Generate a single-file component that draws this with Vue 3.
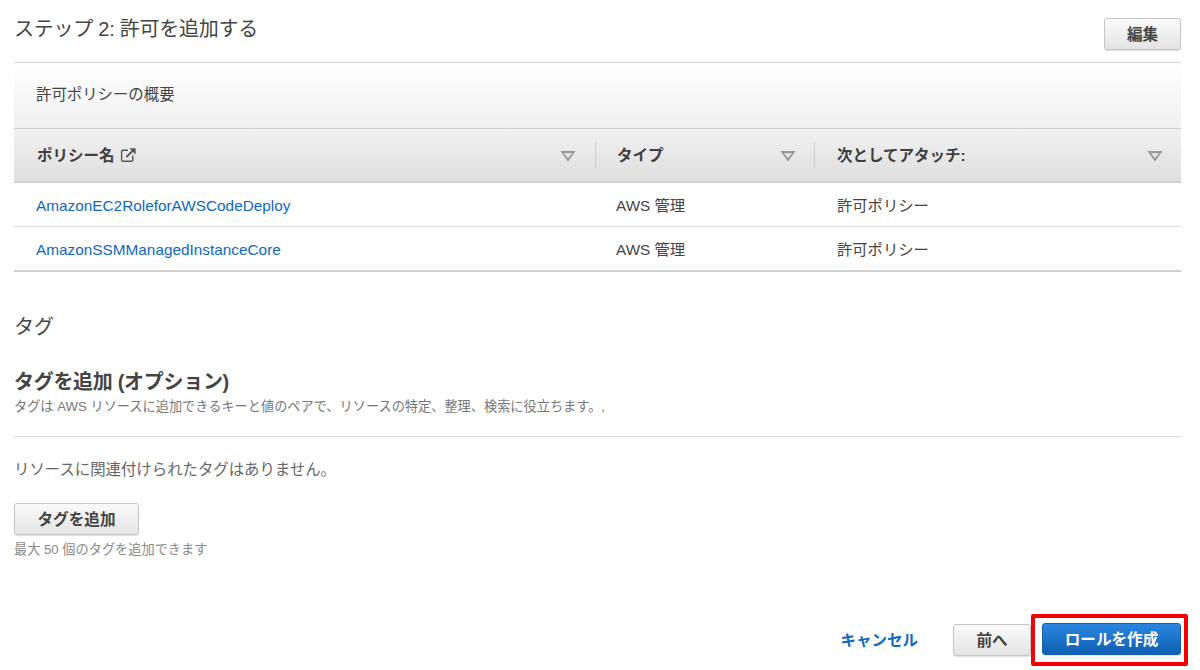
<script setup>
const policies = [
  { name: 'AmazonEC2RoleforAWSCodeDeploy', type: 'AWS 管理', attach: '許可ポリシー' },
  { name: 'AmazonSSMManagedInstanceCore', type: 'AWS 管理', attach: '許可ポリシー' },
]
</script>

<template>
  <main class="page">
    <header class="step-head">
      <h2 class="h-light step-title">ステップ 2: 許可を追加する</h2>
      <button class="btn edit">編集</button>
    </header>

    <section class="table">
      <div class="summary">許可ポリシーの概要</div>
      <div class="row thead">
        <div class="cell c1">
          <span class="th-label">ポリシー名</span>
          <svg class="ext" width="17" height="16" viewBox="0 0 17 16" fill="none" stroke="#555" stroke-width="1.4">
            <path d="M8 3.2H2.8a1.2 1.2 0 0 0-1.2 1.2v8.6a1.2 1.2 0 0 0 1.2 1.2h8.8a1.2 1.2 0 0 0 1.2-1.2V8.6" />
            <path d="M6.4 10 13.6 2.8" stroke-width="1.9" />
            <path d="M9.4 1.2h6.2v6.2z" fill="#555" stroke="none" />
          </svg>
          <i class="sort"></i>
        </div>
        <div class="cell c2"><span class="th-label">タイプ</span><i class="sort"></i></div>
        <div class="cell c3"><span class="th-label">次としてアタッチ:</span><i class="sort"></i></div>
      </div>
      <div v-for="p in policies" :key="p.name" class="row tbody">
        <div class="cell c1"><a class="link">{{ p.name }}</a></div>
        <div class="cell c2">{{ p.type }}</div>
        <div class="cell c3">{{ p.attach }}</div>
      </div>
    </section>

    <h2 class="h-light tags-title">タグ</h2>
    <h3 class="add-title">タグを追加 (オプション)</h3>
    <p class="desc">タグは AWS リソースに追加できるキーと値のペアで、リソースの特定、整理、検索に役立ちます。,</p>
    <hr class="rule" />
    <p class="empty">リソースに関連付けられたタグはありません。</p>
    <button class="btn add">タグを追加</button>
    <p class="hint">最大 50 個のタグを追加できます</p>

    <footer class="actions">
      <a class="cancel">キャンセル</a>
      <button class="btn prev">前へ</button>
      <div class="highlight"><button class="btn primary">ロールを作成</button></div>
    </footer>
  </main>
</template>

<style>
html, body { margin: 0; background: #fff; overflow: hidden; }
</style>

<style scoped>
.page {
  box-sizing: border-box;
  width: 1200px;
  height: 670px;
  padding: 0 19px 0 14px;
  font-family: "Liberation Sans", "Noto Sans CJK JP", sans-serif;
  color: #444;
  overflow: hidden;
}
.step-head {
  display: flex;
  justify-content: space-between;
  height: 62px;
  padding-top: 18px;
  box-sizing: border-box;
}
.h-light {
  margin: 0;
  font-size: 20px;
  font-weight: 400;
  line-height: 20px;
  color: #444;
}
.step-title { letter-spacing: -0.25px; padding-top: 1px; }
.btn {
  box-sizing: border-box;
  height: 32px;
  padding: 0 0 3px;
  font-family: inherit;
  font-size: 15.6px;
  font-weight: 700;
  color: #444;
  border: 1px solid #c6c6c6;
  border-radius: 3px;
  background: linear-gradient(#fafafa, #e4e4e4);
  box-shadow: 0 1px 1px rgba(0, 0, 0, .12);
}
.edit { width: 77px; }
.table { border-top: 1px solid #d5d5d5; }
.summary {
  height: 66px;
  box-sizing: border-box;
  padding: 22px 22px 0;
  font-size: 15.4px;
  line-height: 20px;
  background: linear-gradient(#fff, #efefef);
  border-bottom: 1px solid #cdcdcd;
}
.row { display: grid; grid-template-columns: 581px 219px 367px; }
.cell { display: flex; align-items: center; box-sizing: border-box; font-size: 15.3px; }
.c1 { padding-left: 22px; }
.c2 { padding-left: 21px; }
.c3 { padding-left: 23px; }
.thead {
  background: linear-gradient(#f1f1f1, #dfdfdf);
  border-bottom: 2px solid #d2d2d2;
  height: 52px;
}
.thead .c1 { padding-left: 23px; }
.thead .c2 { padding-left: 22px; }
.thead .cell { position: relative; }
.thead .cell + .cell::before {
  content: "";
  position: absolute;
  left: 0;
  top: 13px;
  height: 26px;
  width: 1px;
  background: #cfcfcf;
}
.th-label { font-size: 15.5px; font-weight: 700; color: #3f3f3f; padding-bottom: 2px; }
.ext { margin-left: 5px; }
.sort {
  margin-left: auto;
  margin-right: 19px;
  width: 16px;
  height: 11px;
  margin-top: 2px;
  background: #999;
  clip-path: polygon(0 0, 100% 0, 50% 100%, 0 0, 24% 24%, 50% 68%, 76% 24%, 24% 24%, 0 0);
}
.c2 .sort, .c3 .sort { margin-right: 18px; }
.tbody { height: 44px; border-bottom: 1px solid #dcdcdc; box-sizing: border-box; }
.tbody:last-child { height: 45px; border-bottom: 2px solid #d0d0d0; }
.tbody .c2, .tbody .c3 { padding-bottom: 2px; }
.link { color: #0f68bd; font-size: 15.35px; position: relative; top: 1px; }
.tags-title { margin-top: 45px; }
.add-title {
  margin: 35px 0 0;
  font-size: 20px;
  line-height: 20px;
  font-weight: 700;
  letter-spacing: -0.3px;
  color: #444;
}
.desc {
  margin: 6px 0 0;
  font-size: 13.2px;
  line-height: 18px;
  color: #777;
}
.rule { margin: 20px 0 0; border: 0; border-top: 1px solid #dcdcdc; }
.empty {
  margin: 23px 0 0;
  font-size: 15.4px;
  line-height: 20px;
  color: #666;
}
.add { display: block; width: 125px; margin-top: 23px; }
.hint {
  margin: 6px 0 0;
  font-size: 13.2px;
  line-height: 18px;
  color: #8a8a8a;
}
.actions {
  display: flex;
  align-items: center;
  justify-content: flex-end;
  margin: 55px -7px 0 0;
}
.cancel {
  margin-right: 35px;
  padding-bottom: 3px;
  font-size: 15.5px;
  font-weight: 700;
  color: #0f68bd;
}
.prev { width: 78px; }
.highlight {
  margin-left: 0;
  padding: 5px 3px 7px 7px;
  border: 4px solid #f30000;
  border-radius: 2px;
  display: flex;
}
.primary {
  width: 139px;
  color: #fff;
  border-color: #1a5ea8;
  background: linear-gradient(#2b86e0, #0f5fb3);
}
</style>
